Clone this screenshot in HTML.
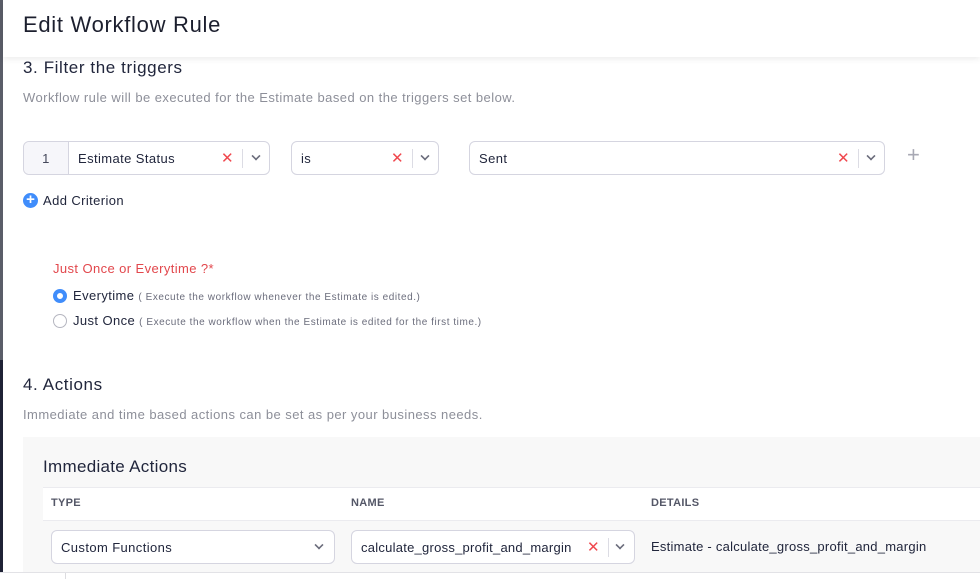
<!DOCTYPE html>
<html><head><meta charset="utf-8"><style>
*{box-sizing:border-box;margin:0;padding:0}
body{width:980px;height:579px;overflow:hidden;background:#fff;font-family:"Liberation Sans",sans-serif;color:#21263c;position:relative;letter-spacing:.4px}
.lbar{position:absolute;left:0;top:0;width:3px;height:360px;background:#5a5d68}
.lbar2{position:absolute;left:0;top:360px;width:3px;height:212px;background:#1f2235}
.hdr{position:absolute;left:3px;top:0;right:0;height:57px;background:#fff;box-shadow:0 2px 6px rgba(0,0,0,.08);z-index:2}
.hdr h1{position:absolute;left:20px;top:12px;font-size:22px;font-weight:normal;color:#1c1f2e;letter-spacing:.7px}
.abs{position:absolute}
h2{font-size:17px;font-weight:normal;color:#21263c;letter-spacing:.6px}
.sub{font-size:13px;color:#8d8f99;letter-spacing:.45px}
.box{position:absolute;height:34px;border:1px solid #d5d5e0;border-radius:6px;background:#fff;font-size:13px}
.box .t{position:absolute;top:9px}
.x{position:absolute;top:7px;color:#f0484e;font-size:15px}
.sep{position:absolute;top:7px;width:1px;height:19px;background:#dcdce4}
.chev{position:absolute;top:12px;width:8px;height:8px;border-right:2px solid #6b6d7c;border-bottom:2px solid #6b6d7c;transform:rotate(45deg) scale(.8)}
.radio{position:absolute;width:14px;height:14px;border-radius:50%}
.small{font-size:10px;color:#6b6d7c;letter-spacing:.55px}
.panel{position:absolute;left:23px;top:437px;right:0;height:140px;background:#f8f8f8}
.th{position:absolute;top:497px;font-size:11px;color:#545767;font-weight:bold;letter-spacing:.3px}
</style></head><body>
<div class="lbar"></div><div class="lbar2"></div>
<div class="hdr"><h1>Edit Workflow Rule</h1></div>
<h2 class="abs" style="left:23px;top:58px">3. Filter the triggers</h2>
<div class="abs sub" style="left:23px;top:90px">Workflow rule will be executed for the Estimate based on the triggers set below.</div>

<div class="box" style="left:23px;top:141px;width:247px">
 <div style="position:absolute;left:0;top:0;width:45px;height:32px;background:#f6f6fa;border-right:1px solid #d5d5e0;border-radius:6px 0 0 6px;text-align:center;padding-top:9px;color:#44475a">1</div>
 <span class="t" style="left:54px">Estimate Status</span>
 <span class="x" style="left:197px">✕</span><div class="sep" style="left:218px"></div><div class="chev" style="left:228px;top:10px"></div>
</div>
<div class="box" style="left:291px;top:141px;width:148px">
 <span class="t" style="left:9px">is</span>
 <span class="x" style="left:99px">✕</span><div class="sep" style="left:120px"></div><div class="chev" style="left:129px;top:10px"></div>
</div>
<div class="box" style="left:469px;top:141px;width:416px">
 <span class="t" style="left:9px">Sent</span>
 <span class="x" style="left:367px">✕</span><div class="sep" style="left:388px"></div><div class="chev" style="left:397px;top:10px"></div>
</div>
<div class="abs" style="left:907px;top:142px;font-size:22px;color:#a8a9b4;font-weight:300">+</div>

<div class="abs" style="left:23px;top:193px;width:15px;height:15px;border-radius:50%;background:#408dfb;color:#fff;font-size:15px;line-height:14px;text-align:center;font-weight:bold;letter-spacing:0">+</div>
<div class="abs" style="left:43px;top:193px;font-size:13px;color:#21263c">Add Criterion</div>

<div class="abs" style="left:53px;top:261px;font-size:13px;color:#e2474c">Just Once or Everytime ?*</div>
<div class="radio" style="left:53px;top:289px;border:4px solid #408dfb;background:#fff"></div>
<div class="abs" style="left:73px;top:288px;font-size:13px">Everytime <span class="small">( Execute the workflow whenever the Estimate is edited.)</span></div>
<div class="radio" style="left:53px;top:314px;border:1px solid #b5b6c0"></div>
<div class="abs" style="left:73px;top:313px;font-size:13px">Just Once <span class="small">( Execute the workflow when the Estimate is edited for the first time.)</span></div>

<h2 class="abs" style="left:23px;top:375px">4. Actions</h2>
<div class="abs sub" style="left:23px;top:407px">Immediate and time based actions can be set as per your business needs.</div>

<div class="panel"></div>
<div class="abs" style="left:43px;top:457px;font-size:17px;color:#21263c;letter-spacing:.3px">Immediate Actions</div>
<div class="abs" style="left:43px;top:487px;right:0;height:34px;background:#fff;border-top:1px solid #ebebef;border-bottom:1px solid #ebebef"></div>
<div class="th" style="left:51px">TYPE</div>
<div class="th" style="left:351px">NAME</div>
<div class="th" style="left:651px">DETAILS</div>

<div class="box" style="left:51px;top:530px;width:284px"><span class="t" style="left:9px">Custom Functions</span><div class="chev" style="left:263px;top:10px"></div></div>
<div class="box" style="left:351px;top:530px;width:284px"><span class="t" style="left:9px;letter-spacing:.25px">calculate_gross_profit_and_margin</span>
 <span class="x" style="left:235px">✕</span><div class="sep" style="left:256px"></div><div class="chev" style="left:264px;top:10px"></div></div>
<div class="abs" style="left:651px;top:539px;font-size:13px;letter-spacing:.25px">Estimate - calculate_gross_profit_and_margin</div>

<div class="abs" style="left:0;top:572px;width:980px;height:7px;background:#fff;border-top:1px solid #e2e2e6;z-index:3"></div>
<div class="abs" style="left:65px;top:573px;width:1px;height:6px;background:#dcdce0;z-index:4"></div>
</body></html>
